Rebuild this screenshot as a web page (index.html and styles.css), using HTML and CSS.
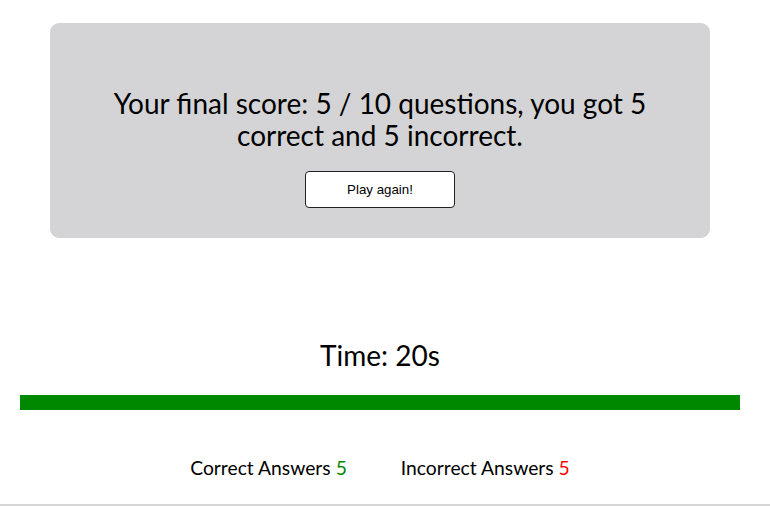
FILE: index.html
```html
<!DOCTYPE html>
<html>
<head>
<meta charset="utf-8">
<link rel="stylesheet" href="styles.css">
</head>
<body>
<div class="page">
  <div class="card">
    <h2 class="final">Your final score: 5 / 10 questions, you got 5 correct and 5 incorrect.</h2>
    <button class="again">Play again!</button>
  </div>
  <div class="time">Time: 20s</div>
  <div class="bar"></div>
  <div class="answers">
    <span>Correct Answers <b class="good">5</b></span>
    <span>Incorrect Answers <b class="bad">5</b></span>
  </div>
</div>
<div class="rule"></div>
</body>
</html>
```
FILE: styles.css
```css
html, body { margin: 0; padding: 0; background: #fff; }
body { font-family: Lato, "Open Sans", sans-serif; color: #000; height: 506px; display: flex; flex-direction: column; overflow: hidden; }
.page { width: 720px; margin-left: 20px; flex: 1; }
.card {
  margin: 23px 30px 0;
  background: #d4d4d6;
  border-radius: 9px;
  padding: 64px 60px 30px;
  display: flex; flex-direction: column; align-items: center;
}
.final { margin: 0; font-weight: 400; font-size: 28px; line-height: 32px; text-align: center; }
.again {
  margin-top: 20px;
  width: 150px; height: 37px;
  background: #fff; border: 1px solid #222; border-radius: 4px;
  font-family: "Liberation Sans", Arial, sans-serif; font-size: 13.3px; color: #000;
}
.time { margin-top: 101px; text-align: center; font-size: 28px; line-height: 32px; }
.bar { margin-top: 24px; height: 15px; background: #008800; }
.answers { margin-top: 46px; display: flex; justify-content: center; gap: 54px; font-size: 19.3px; line-height: 24px; }
.answers b { font-weight: 400; }
.good { color: #008800; }
.bad { color: #ff0000; }
.rule { height: 2px; background: #d6d6d6; }
```
